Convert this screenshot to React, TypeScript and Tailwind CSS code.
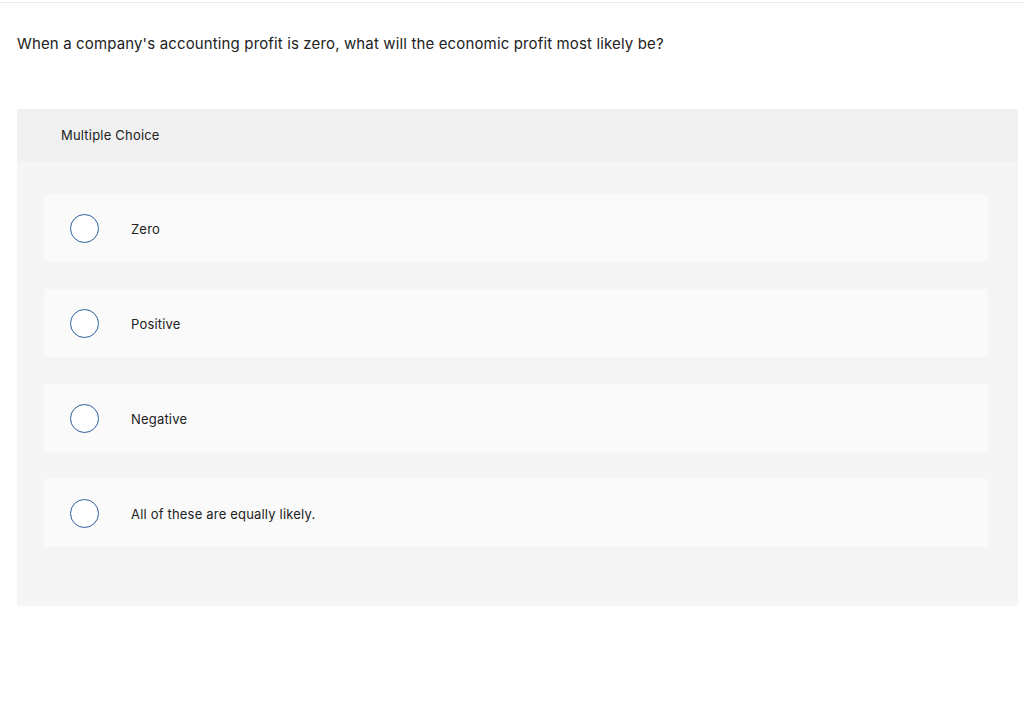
const choices = ['Zero', 'Positive', 'Negative', 'All of these are equally likely.'];

export default function App() {
  return (
    <div className="min-h-[716px] bg-white text-[#222] font-['Inter','Lato',sans-serif]">
      <div className="h-[2px]" />
      <div className="border-t border-[#ececec]" />

      <div className="px-[17px] pt-[30px]">
        <p className="text-[15px] leading-[22px] tracking-[0.14px]">
          When a company's accounting profit is zero, what will the economic profit most likely be?
        </p>

        <div className="mt-[54px] mr-[-11px] rounded-[2px] bg-[#f5f5f5] overflow-hidden">
          <div className="h-[52px] bg-[#f0f0f0] px-[44px] flex items-center">
            <span className="text-[13px] tracking-[0.2px] pt-[2px]">Multiple Choice</span>
          </div>

          <div className="pt-[33px] pb-[59px] pl-[27px] pr-[30px] flex flex-col gap-[27px]">
            {choices.map((c) => (
              <label
                key={c}
                className="h-[68px] rounded-[3px] bg-[#fafafa] flex items-center pl-[26px] cursor-pointer"
              >
                <span className="w-[29px] h-[29px] rounded-full border border-[#2d5d9c] bg-white shrink-0" />
                <span className="ml-[32px] text-[13px] tracking-[0.19px] pt-[3px]">{c}</span>
              </label>
            ))}
          </div>
        </div>
      </div>
    </div>
  );
}
